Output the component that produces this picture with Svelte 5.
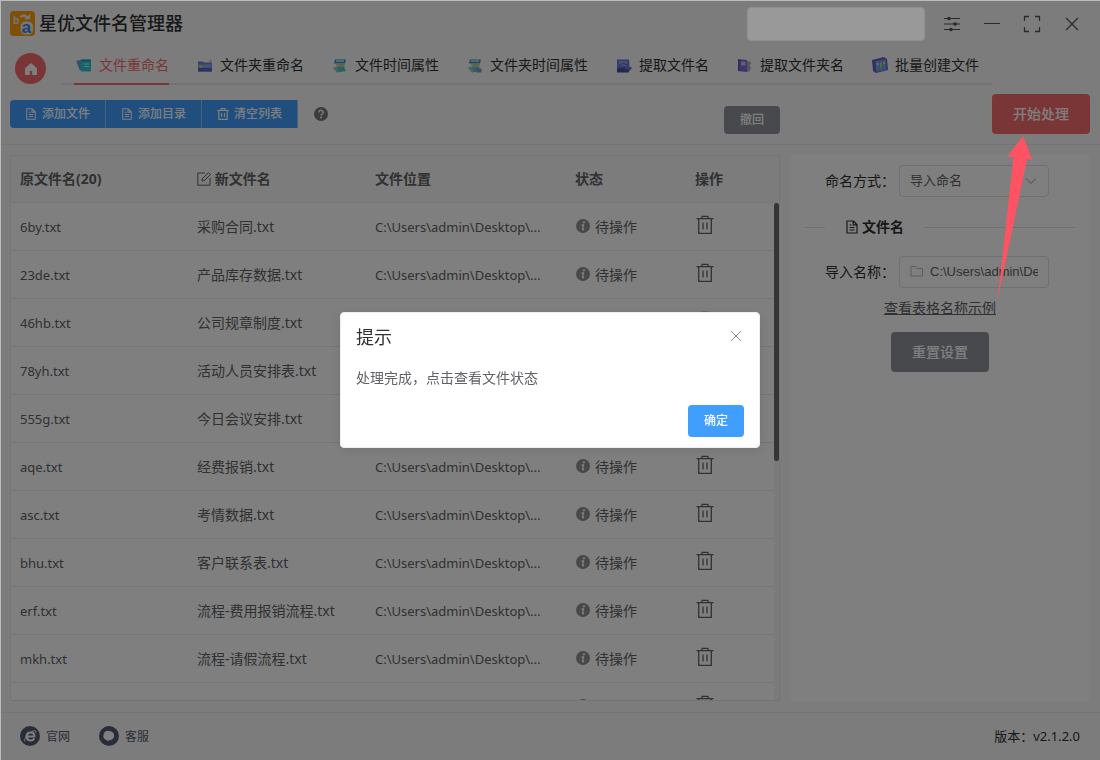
<script>
  let tabs = [
    { id: 'file-rename', label: '文件重命名' },
    { id: 'dir-rename', label: '文件夹重命名' },
    { id: 'file-time', label: '文件时间属性' },
    { id: 'dir-time', label: '文件夹时间属性' },
    { id: 'file-extract', label: '提取文件名' },
    { id: 'dir-extract', label: '提取文件夹名' },
    { id: 'create', label: '批量创建文件' }
  ];
  let active = 'file-rename';

  let files = [
    { name: '6by.txt', newName: '采购合同.txt' },
    { name: '23de.txt', newName: '产品库存数据.txt' },
    { name: '46hb.txt', newName: '公司规章制度.txt' },
    { name: '78yh.txt', newName: '活动人员安排表.txt' },
    { name: '555g.txt', newName: '今日会议安排.txt' },
    { name: 'aqe.txt', newName: '经费报销.txt' },
    { name: 'asc.txt', newName: '考情数据.txt' },
    { name: 'bhu.txt', newName: '客户联系表.txt' },
    { name: 'erf.txt', newName: '流程-费用报销流程.txt' },
    { name: 'mkh.txt', newName: '流程-请假流程.txt' },
    { name: '', newName: '' }
  ];
  let total = 20;
  let dir = 'C:\\Users\\admin\\Desktop\\...';
  let mode = '导入命名';
  let importPath = 'C:\\Users\\admin\\Desktop';
  let showDialog = true;

  const removeFile = (index) => {
    files = files.filter((_, i) => i !== index);
    total -= 1;
  };

  const clearFiles = () => {
    files = [];
    total = 0;
  };
</script>

{#snippet docIcon(size)}
  <svg width={size} height={size} viewBox="0 0 14 14" fill="none" stroke="currentColor" stroke-width="1.2">
    <path d="M2 1h6.5L12 4.500V13H2z M8.200 1v3.800H12 M4.500 5h2 M4.500 7.500h5 M4.500 10h5" />
  </svg>
{/snippet}

{#snippet tabIcon(id)}
  <svg width="16" height="16" viewBox="0 0 16 16">
    {#if id === 'file-rename'}
      <path d="M0 4l6-1.500 1 10-3 1z" fill="#8f9be0" />
      <path d="M2 4l4-1v10.500l-3-2z" fill="#5f9fd8" />
      <rect x="5" y="2.500" width="10" height="12" rx="1" fill="#2fc9d2" />
      <path d="M5 3.500a1 1 0 0 1 1-1h8a1 1 0 0 1 1 1v1H5z" fill="#2a9fb4" />
      <path d="M8 7h5M8 9.500h5" stroke="#b8f0f0" stroke-width="1.200" />
    {:else if id === 'dir-rename'}
      <path d="M1 4.500h5l1 1h8v9H1z" fill="#6c80d0" />
      <path d="M1 7h14v4H1z" fill="#7c98dc" />
      <path d="M1 11h14v3.500H1z" fill="#5a66c4" />
      <path d="M2.500 9.500h3" stroke="#e8d86a" stroke-width="2" />
      <path d="M6.500 9h6" stroke="#b0c0f0" />
      <path d="M12 4.500l3-1" stroke="#d88a98" />
    {:else if id === 'file-time' || id === 'dir-time'}
      <path d="M3 2.500h11l-1 4H2z" fill="#3f8fc8" />
      <path d="M4 4h8" stroke="#c8e4f0" stroke-width="1.500" />
      <path d="M4 6.500h9l-1 4.500H5z" fill="#b4ccb8" />
      <path d="M7 6.500l3 2-3 2" stroke="#d8b860" fill="none" />
      <path d="M1 10.500l11-.5 2 4-9 1.500z" fill="#4cc4cc" />
      <path d="M1 10.500l4 5 2-1-2-4z" fill="#90ccb8" />
      {#if id === 'dir-time'}
        <path d="M9.500 11.500h5v4h-5z" fill="#8890d0" />
      {/if}
    {:else if id === 'file-extract'}
      <path d="M1 2.500h12l.5 8-1.500 3H1z" fill="#6478d0" />
      <path d="M3 4h8.500v5H3z" fill="#8ca0e4" />
      <path d="M3 8.500l4-2 5 1.500" stroke="#5468bc" fill="none" />
      <path d="M1 11.500l8-1 6 .5-2.500 4.500H1z" fill="#4250a4" />
      <path d="M9 10h6.500v2.500H9z" fill="#6474cc" />
    {:else if id === 'dir-extract'}
      <path d="M1 2l9 1v12l-9-1z" fill="#7a6cd0" />
      <path d="M1 2l1.500 1v11L1 14z" fill="#6456bc" />
      <rect x="4" y="4.500" width="4.500" height="4" fill="#bcbcf0" />
      <path d="M10 4l3 1v9l-3 1z" fill="#a8a4dc" />
      <path d="M12 6.500l2-1M12 12l2-1.500" stroke="#e09a78" stroke-width="1.600" />
    {:else}
      <path d="M0 3l12-3 3 2 1 11-12 3-3-2z" fill="#6c5cc0" />
      <path d="M3 4l11-2 1 11-10 2z" fill="#8c80d8" />
      <path d="M5.500 4.500v9M8.800 4v9M12 3.500v9" stroke="#62bcdc" stroke-width="2.200" />
      <path d="M8.800 6v4" stroke="#e0cc60" stroke-width="1.500" />
      <path d="M5.500 6v2M12 5v2" stroke="#d0e8f0" stroke-width="1.500" />
    {/if}
  </svg>
{/snippet}

<div class="app">
  <header class="titlebar">
    <svg class="logo" width="25" height="25" viewBox="0 0 26 26">
      <rect width="26" height="26" rx="4" fill="#ff9f0c" />
      <text x="3" y="13" class="logo-b">b</text>
      <path d="M11 6.500c3-3 6-2 7 1" fill="none" stroke="#eee" stroke-width="2.400" />
      <path d="M14.500 8.500h6.500v-5.500z" fill="#eee" />
      <rect x="11" y="11" width="13" height="13.500" rx="5" fill="#eee" />
      <text x="12" y="22.500" class="logo-a">a</text>
    </svg>
    <h1>星优文件名管理器</h1>
    <div class="account"></div>
    <div class="win-buttons">
      <button aria-label="设置">
        <svg width="18" height="18" viewBox="0 0 18 18" stroke="currentColor" stroke-width="1.200" fill="currentColor">
          <path d="M1 3.500h16M1 9h16M1 14.500h16" />
          <circle cx="6" cy="3.500" r="1.200" /><circle cx="12" cy="9" r="1.200" /><circle cx="8" cy="14.500" r="1.200" />
        </svg>
      </button>
      <button aria-label="最小化">
        <svg width="18" height="18" viewBox="0 0 18 18"><path d="M1 8.500h16" stroke="currentColor" /></svg>
      </button>
      <button aria-label="最大化">
        <svg width="18" height="18" viewBox="0 0 18 18" fill="none" stroke="currentColor" stroke-width="1.300">
          <path d="M1.500 6V1.500H6M12 1.500h4.500V6M16.500 12v4.500H12M6 16.500H1.500V12" />
        </svg>
      </button>
      <button aria-label="关闭">
        <svg width="18" height="18" viewBox="0 0 18 18"><path d="M3 3l12 12M15 3L3 15" stroke="currentColor" stroke-width="1.200" /></svg>
      </button>
    </div>
  </header>

  <nav class="nav">
    <button class="home" aria-label="首页">
      <svg width="14" height="14" viewBox="0 0 14 14"><path d="M7 1.500l5.500 4.800V12.500H8.700V8.500H5.300v4H1.500V6.300z" fill="#fff" stroke="#fff" stroke-linejoin="round" /></svg>
    </button>
    <div class="tabs">
      {#each tabs as tab}
        <button class="tab" class:active={tab.id === active} on:click={() => (active = tab.id)}>
          {@render tabIcon(tab.id)}<span>{tab.label}</span>
        </button>
      {/each}
    </div>
  </nav>

  <div class="toolbar">
    <div class="btn-group">
      <button class="btn mini primary">{@render docIcon(12)}<span>添加文件</span></button>
      <button class="btn mini primary">{@render docIcon(12)}<span>添加目录</span></button>
      <button class="btn mini primary" on:click={clearFiles}>
        <svg width="12" height="12" viewBox="0 0 12 12" fill="none" stroke="currentColor" stroke-width="1.200">
          <path d="M0 2.500h12M4 2.500V.6h4v1.900M1.800 2.500v8.900h8.400V2.500M4.500 5v4M7.500 5v4" />
        </svg>
        <span>清空列表</span>
      </button>
    </div>
    <svg class="help" width="14" height="14" viewBox="0 0 14 14">
      <circle cx="7" cy="7" r="7" fill="#77787a" />
      <path d="M4.800 5.500c0-3 4.500-2.800 4.400 0 0 1.500-2.200 1.500-2.200 3.100" fill="none" stroke="#fff" stroke-width="1.400" />
      <circle cx="7" cy="10.500" r="1" fill="#fff" />
    </svg>
    <button class="btn mini info undo"><span>撤回</span></button>
    <div class="start">
      <button class="btn danger"><span>开始处理</span></button>
    </div>
  </div>

  <main class="content">
    <section class="list">
      <table>
        <thead>
          <tr>
            <th class="col-name">原文件名({total})</th>
            <th class="col-new">
              <svg width="14" height="14" viewBox="0 0 14 14" fill="none" stroke="currentColor">
                <path d="M8 1H.8v12.200H13V6M5 9l.4-2.400L11.500.6l1.900 1.900-6 6z" />
              </svg>
              新文件名
            </th>
            <th class="col-path">文件位置</th>
            <th class="col-status">状态</th>
            <th>操作</th>
          </tr>
        </thead>
        <tbody>
          {#each files as file, i}
            <tr>
              <td class="latin">{file.name}</td>
              <td>{file.newName}</td>
              <td class="latin">{file.name ? dir : ''}</td>
              <td>
                <div class="status">
                  <svg width="14" height="14" viewBox="0 0 14 14">
                    <circle cx="7" cy="7" r="7" fill="#909194" />
                    <circle cx="7.900" cy="3.400" r="1.100" fill="#fff" />
                    <path d="M5.500 6h2l-1 4.500h1.700" fill="none" stroke="#fff" stroke-width="1.300" />
                  </svg>
                  <span>{file.name ? '待操作' : ''}</span>
                </div>
              </td>
              <td>
                <button class="trash" aria-label="删除" on:click={() => removeFile(i)}>
                  <svg width="20" height="20" viewBox="0 0 20 20" fill="none" stroke="currentColor" stroke-width="1.300">
                    <path d="M1.500 3.700h17M7 3.500V1.400h6v2.100M3.700 3.700v14.600h12.600V3.700M8 7.500v7M12 7.500v7" />
                  </svg>
                </button>
              </td>
            </tr>
          {/each}
        </tbody>
      </table>
      <div class="scrollbar"><div class="thumb"></div></div>
    </section>

    <aside class="panel">
      <div class="field">
        <label for="mode">命名方式：</label>
        <div class="control">
          <select id="mode" bind:value={mode}>
            <option>导入命名</option>
          </select>
          <svg class="chevron" width="12" height="12" viewBox="0 0 12 12"><path d="M1 3.500l5 5 5-5" fill="none" stroke="#c0c4cc" stroke-width="1.200" /></svg>
        </div>
      </div>
      <div class="divider">
        <div class="divider-title">{@render docIcon(14)}<span>文件名</span></div>
      </div>
      <div class="field">
        <label for="import">导入名称：</label>
        <div class="control">
          <svg class="folder" width="14" height="14" viewBox="0 0 14 14"><path d="M1 2.500h4.500l1.500 2h5.500V12H1z" fill="none" stroke="#b4b7be" /></svg>
          <input id="import" type="text" bind:value={importPath} />
        </div>
      </div>
      <a class="sample" href="#sample">查看表格名称示例</a>
      <button class="btn info reset"><span>重置设置</span></button>
    </aside>
  </main>

  <footer class="footer">
    <a href="#site">
      <svg width="20" height="20" viewBox="0 0 20 20">
        <circle cx="10" cy="10" r="10" fill="#525a70" />
        <path d="M14.200 12.500c-1.600 3.200-7.700 2.700-7.700-2.200 0-5.200 8-5.300 8 .2H7" fill="none" stroke="#fff" stroke-width="2" />
        <path d="M5 15.500c-2-1.500 3-9.500 9.500-10.800 2-.3 1.500 1.300.8 2.300" fill="none" stroke="#fff" />
      </svg>
      官网
    </a>
    <a href="#service">
      <svg width="20" height="20" viewBox="0 0 20 20">
        <circle cx="10" cy="10" r="10" fill="#525a70" />
        <path d="M10 5a5 4.500 0 0 1 0 9.300l-1 1-1.300-1.200A4.700 4.700 0 0 1 10 5z" fill="#fff" />
      </svg>
      客服
    </a>
    <span class="version">版本：v2.1.2.0</span>
  </footer>

  <svg class="arrow" width="36" height="166" viewBox="0 0 36 166">
    <path d="M26 1L10 22l6.500-.5L.6 165 30 24l5.500 1z" fill="#ff5364" />
  </svg>
</div>

{#if showDialog}
  <div class="mask">
    <div class="dialog" role="dialog" aria-labelledby="dialog-title">
      <div class="dialog-header">
        <h2 id="dialog-title">提示</h2>
        <button class="close" aria-label="关闭" on:click={() => (showDialog = false)}>
          <svg width="16" height="16" viewBox="0 0 16 16"><path d="M3 3l10 10M13 3L3 13" stroke="#909399" /></svg>
        </button>
      </div>
      <p>处理完成，点击查看文件状态</p>
      <div class="dialog-btns">
        <button class="btn small primary" on:click={() => (showDialog = false)}><span>确定</span></button>
      </div>
    </div>
  </div>
{/if}

<style>
  :global(body) {
    margin: 0;
    font-family: "Noto Sans", "Noto Sans CJK SC", sans-serif;
    font-size: 14px;
    color: #606266;
  }

  button, select, input {
    font-family: inherit;
  }

  button {
    padding: 0;
    border: none;
    background: none;
    cursor: pointer;
  }

  svg {
    display: block;
    flex: none;
  }

  .app {
    position: relative;
    display: flex;
    flex-direction: column;
    height: 100vh;
    background: #f8f8f8;
    overflow: hidden;
  }

  .app::after {
    content: "";
    position: absolute;
    inset: 0;
    z-index: 12;
    border-top: 1px solid #b9bcbb;
    border-left: 1px solid #b9bcbb;
    pointer-events: none;
  }

  .titlebar {
    display: flex;
    align-items: center;
    height: 47px;
    padding: 0 8px 0 10px;
  }

  h1 {
    flex: 1;
    margin: 0 0 0 4px;
    padding-bottom: 2px;
    font-size: 18px;
    line-height: 24px;
    font-weight: 500;
    color: #303133;
  }

  .logo-b, .logo-a {
    font-family: "Liberation Sans", sans-serif;
    font-weight: bold;
    font-size: 11px;
    fill: #eee;
  }

  .logo-a {
    font-size: 18px;
    fill: #3f86e8;
  }

  .account {
    position: relative;
    z-index: 11;
    width: 176px;
    height: 32px;
    margin-right: 7px;
    border: 1px solid #8f8f8f;
    border-radius: 4px;
    background: #999;
  }

  .win-buttons {
    display: flex;
  }

  .win-buttons button {
    display: flex;
    align-items: center;
    justify-content: center;
    width: 40px;
    height: 40px;
    color: #555;
  }

  .nav {
    display: flex;
    align-items: flex-end;
    height: 38px;
    padding-left: 15px;
  }

  .home {
    display: flex;
    align-items: center;
    justify-content: center;
    width: 31px;
    height: 31px;
    margin-bottom: 1px;
    border-radius: 50%;
    background: #f56c6c;
  }

  .tabs {
    display: flex;
    gap: 26px;
    margin-left: 15px;
    padding: 0 13px;
    box-shadow: inset 0 -2px #e4e4ee;
  }

  .tab {
    display: flex;
    align-items: center;
    gap: 7px;
    height: 38px;
    padding-left: 2px;
    border-bottom: 2px solid transparent;
    font-size: 14px;
    color: #303133;
    white-space: nowrap;
  }

  .tab.active {
    border-color: #f56c6c;
    color: #f56c6c;
  }

  .toolbar {
    display: flex;
    align-items: center;
    height: 40px;
    padding: 9px 10px 10px;
    border-bottom: 1px solid #ebebed;
  }

  .btn {
    display: flex;
    align-items: center;
    justify-content: center;
    gap: 5px;
    height: 40px;
    padding: 0 21px;
    border-radius: 4px;
    font-size: 14px;
    font-weight: 500;
    color: #fff;
    white-space: nowrap;
  }

  /* the CJK face sits low in its line box */
  .btn span, .tab span, .field label, .divider-title span {
    padding-bottom: 2px;
  }

  .btn.mini {
    height: 28px;
    padding: 0 16px;
    font-size: 12px;
  }

  .btn.small {
    height: 32px;
    padding: 0 16px;
    font-size: 12px;
  }

  .primary {
    background: #409eff;
  }

  .info {
    background: #909399;
  }

  .danger {
    background: #f56c6c;
  }

  .btn-group {
    display: flex;
  }

  .btn-group .btn {
    padding: 0 15px;
    border-right: 1px solid #8cc5ff;
    border-radius: 0;
  }

  .btn-group .btn:first-child {
    border-radius: 4px 0 0 4px;
  }

  .help {
    margin-left: 16px;
  }

  .undo {
    align-self: flex-end;
    margin-left: auto;
  }

  .start {
    display: flex;
    justify-content: flex-end;
    width: 300px;
    margin-left: 10px;
  }

  .content {
    display: flex;
    flex: 1;
    gap: 10px;
    min-height: 0;
    padding: 10px 10px 11px;
  }

  .list {
    position: relative;
    flex: 1;
    border: 1px solid #e8eaee;
    background: #fff;
    overflow: hidden;
  }

  table {
    width: 100%;
    table-layout: fixed;
    border-collapse: separate;
    border-spacing: 0;
  }

  th, td {
    box-sizing: border-box;
    height: 48px;
    padding: 0 9px 2px;
    border-bottom: 1px solid #e8eaee;
    text-align: left;
    white-space: nowrap;
  }

  th {
    height: 47px;
    background: #f8f8f8;
    font-weight: bold;
  }

  th svg {
    display: inline-block;
    vertical-align: -2px;
  }

  .col-name {
    width: 177px;
  }

  .col-new {
    width: 178px;
  }

  .col-path {
    width: 200px;
  }

  .col-status {
    width: 120px;
  }

  .latin {
    padding-bottom: 0;
    font-size: 13px;
  }

  .status {
    display: flex;
    align-items: center;
    gap: 5px;
    height: 20px;
    padding-left: 1px;
  }

  .trash {
    display: block;
    margin-bottom: 2px;
    color: #606266;
  }

  .scrollbar {
    position: absolute;
    top: 47px;
    right: 0;
    bottom: 0;
    width: 5px;
    background: #f4f6f6;
  }

  .thumb {
    height: 52%;
    border-radius: 3px;
    background: #686a6a;
  }

  .panel {
    display: flex;
    flex-direction: column;
    box-sizing: border-box;
    width: 300px;
    padding: 10px 15px;
    background: #fff;
  }

  .field {
    display: flex;
    align-items: center;
    gap: 4px;
    padding-left: 20px;
  }

  .field label {
    width: 70px;
    white-space: nowrap;
    color: #303133;
  }

  .control {
    position: relative;
    width: 150px;
  }

  .control select, .control input {
    display: block;
    box-sizing: border-box;
    width: 100%;
    height: 32px;
    padding: 0 10px 2px;
    border: 1px solid #dcdfe6;
    border-radius: 4px;
    background: #fff;
    font-size: 13px;
    color: #606266;
    appearance: none;
  }

  .control input {
    padding-left: 30px;
    font-family: "Liberation Sans", Arial, sans-serif;
  }

  .chevron, .folder {
    position: absolute;
    top: 10px;
    right: 12px;
    pointer-events: none;
  }

  .folder {
    top: 8px;
    left: 11px;
  }

  .divider {
    display: flex;
    align-items: center;
    gap: 20px;
    height: 20px;
    margin: 20px 0 19px;
    font-weight: bold;
    color: #303133;
  }

  .divider::before, .divider::after {
    content: "";
    width: 20px;
    height: 1px;
    background: #dcdfe6;
  }

  .divider::after {
    flex: 1;
  }

  .divider-title {
    display: flex;
    align-items: center;
    gap: 3px;
  }

  .sample {
    align-self: center;
    margin-top: 10px;
    line-height: 20px;
    color: #606266;
  }

  .reset {
    align-self: center;
    margin-top: 14px;
  }

  .footer {
    display: flex;
    align-items: center;
    gap: 29px;
    height: 45px;
    padding: 0 20px 2px;
    border-top: 1px solid #ebebed;
    font-size: 12px;
  }

  .footer a {
    display: flex;
    align-items: center;
    gap: 6px;
    color: #525a70;
    text-decoration: none;
  }

  .version {
    margin-left: auto;
    font-size: 13px;
    color: #303133;
  }

  /* pointer from the link up to the start button, drawn above the mask */
  .arrow {
    position: absolute;
    z-index: 11;
    top: 135px;
    right: 67px;
    pointer-events: none;
  }

  .mask {
    position: fixed;
    inset: 0;
    z-index: 10;
    display: flex;
    align-items: center;
    justify-content: center;
    background: rgba(0, 0, 0, 0.5);
  }

  .dialog {
    box-sizing: border-box;
    width: 420px;
    padding-bottom: 10px;
    border: 1px solid #ebeef5;
    border-radius: 4px;
    background: #fff;
    box-shadow: 0 2px 12px rgba(0, 0, 0, 0.1);
  }

  .dialog-header {
    display: flex;
    justify-content: space-between;
    padding: 15px 15px 10px;
  }

  h2 {
    margin: 0;
    font-size: 18px;
    line-height: 18px;
    font-weight: 400;
    color: #303133;
  }

  .close {
    height: 16px;
  }

  .dialog p {
    margin: 0;
    padding: 10px 15px;
    line-height: 24px;
  }

  .dialog-btns {
    display: flex;
    justify-content: flex-end;
    padding: 5px 15px 0;
  }
</style>
